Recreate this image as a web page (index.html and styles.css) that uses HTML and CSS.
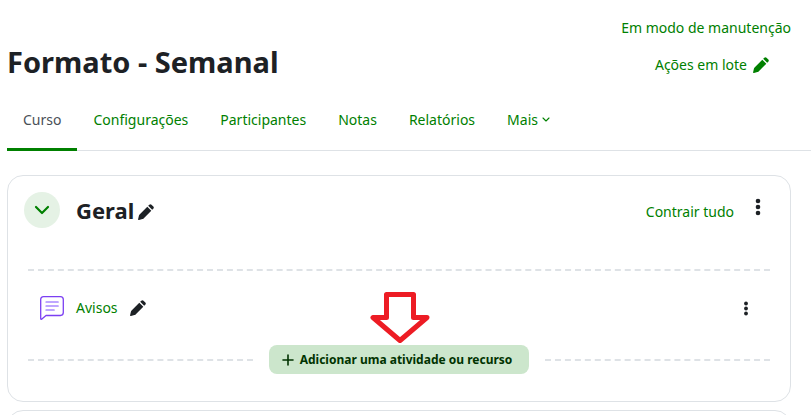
FILE: index.html
```html
<!DOCTYPE html>
<html lang="pt-BR">
<head>
    <meta charset="UTF-8">
    <meta name="viewport" content="width=device-width, initial-scale=1.0">
    <title>Formato - Semanal</title>
    <link rel="stylesheet" href="styles.css">
</head>
<body>
    <svg class="sprite" aria-hidden="true">
        <symbol id="pencil" viewBox="0 0 16 16">
            <path d="M9.3 2.7 13.3 6.7 5.6 14.4Q5.1 14.9 4.4 15.1L1 16Q0 16.2 0.1 15.2L0.9 11.7Q1.1 11 1.6 10.5Z"/>
            <path d="M10.2 1.8 11.3 0.7Q12.4 -0.3 13.5 0.7L15.3 2.5Q16.3 3.6 15.3 4.7L14.2 5.8Z"/>
        </symbol>
        <symbol id="dots" viewBox="0 0 6 18">
            <circle cx="3" cy="3" r="2.3"/>
            <circle cx="3" cy="9" r="2.3"/>
            <circle cx="3" cy="15" r="2.3"/>
        </symbol>
        <symbol id="chevron" viewBox="0 0 16 10">
            <path d="M2 2 8 8 14 2" fill="none" stroke="currentColor" stroke-width="2.2" stroke-linecap="round" stroke-linejoin="round"/>
        </symbol>
    </svg>

    <header class="page-header">
        <h1>Formato - Semanal</h1>
        <div class="header-actions">
            <a href="#">Em modo de manutenção</a>
            <button type="button" class="bulk">Ações em lote <svg class="icon"><use href="#pencil"/></svg></button>
        </div>
    </header>

    <nav class="tabs">
        <a href="#" class="tab active">Curso</a>
        <a href="#" class="tab">Configurações</a>
        <a href="#" class="tab">Participantes</a>
        <a href="#" class="tab">Notas</a>
        <a href="#" class="tab">Relatórios</a>
        <a href="#" class="tab">Mais <svg class="caret"><use href="#chevron"/></svg></a>
    </nav>

    <main>
        <section class="card">
            <div class="section-header">
                <button type="button" class="toggle" aria-label="Contrair"><svg><use href="#chevron"/></svg></button>
                <h2>Geral</h2>
                <button type="button" class="edit" aria-label="Editar nome da seção"><svg class="icon"><use href="#pencil"/></svg></button>
                <a href="#" class="collapse-all">Contrair tudo</a>
                <button type="button" class="menu" aria-label="Editar seção"><svg class="dots"><use href="#dots"/></svg></button>
            </div>
            <div class="section-body">
                <hr class="divider">
                <div class="activity">
                    <svg class="forum" viewBox="0 0 24 24">
                        <path d="M3.6 0.7H20.4Q23.3 0.7 23.3 3.6V16.6Q23.3 19.5 20.4 19.5H6L1.6 23.2Q0.7 23.6 0.7 22.6V3.6Q0.7 0.7 3.6 0.7Z" stroke="#7b3ff2" stroke-width="1.3"/>
                        <path d="M6.2 6H18M6.2 10H18M6.2 14H14" stroke="#a98bff" stroke-width="1.7"/>
                    </svg>
                    <a href="#" class="activity-name">Avisos</a>
                    <button type="button" class="edit" aria-label="Editar título"><svg class="icon"><use href="#pencil"/></svg></button>
                    <button type="button" class="menu" aria-label="Editar atividade"><svg class="dots small"><use href="#dots"/></svg></button>
                </div>
                <div class="add-row">
                    <hr class="divider">
                    <div class="add-wrap">
                        <button type="button" class="add">
                            <svg class="plus" viewBox="0 0 12 12"><path d="M6 1V11M1 6H11" stroke="currentColor" stroke-width="1.6" stroke-linecap="round"/></svg>
                            Adicionar uma atividade ou recurso
                        </button>
                        <svg class="arrow" viewBox="0 0 60 52"><path d="M16.5 2.5H43.5V25.5H57L30 48.5 3 25.5H16.5Z" fill="#fff" stroke="#ed1c24" stroke-width="5" stroke-linejoin="round"/></svg>
                    </div>
                    <hr class="divider">
                </div>
            </div>
        </section>
        <section class="card next"></section>
    </main>
</body>
</html>
```
FILE: styles.css
```css
* {
    box-sizing: border-box;
}
html {
    overflow: hidden;
}
body {
    margin: 0;
    padding-left: 7px;
    font-family: "Noto Sans", "Open Sans", sans-serif;
    font-size: 14px;
    line-height: 20px;
    color: #1d2125;
    background-color: #fff;
}
h1, h2 {
    margin: 0;
    font-weight: bold;
}
a {
    color: #008000;
    text-decoration: none;
}
button {
    padding: 0;
    border: none;
    background: none;
    font: inherit;
    color: inherit;
    cursor: pointer;
}
svg {
    display: block;
    fill: currentColor;
}
.sprite {
    position: absolute;
    width: 0;
    height: 0;
}
.icon {
    width: 16px;
    height: 16px;
}
.page-header {
    display: flex;
    justify-content: space-between;
    align-items: flex-end;
    padding: 18px 20px 0 0;
}
h1 {
    font-size: 29px;
    line-height: 32px;
    padding-bottom: 5px;
}
.header-actions {
    display: flex;
    flex-direction: column;
    align-items: flex-end;
    gap: 17px;
    padding-bottom: 8px;
}
.bulk {
    display: flex;
    align-items: center;
    gap: 6px;
    margin-right: 22px;
    color: #008000;
}
.tabs {
    display: flex;
    margin-top: 6px;
    border-bottom: 1px solid #dee2e6;
}
.tab {
    display: flex;
    align-items: center;
    gap: 4px;
    height: 62px;
    margin-bottom: -1px;
    padding: 2px 16px 0;
    border-bottom: 3px solid transparent;
}
.tab.active {
    color: #495057;
    border-color: #008000;
}
.caret {
    width: 8px;
    height: 5px;
}
main {
    padding: 24px 20px 0 0;
}
.card {
    padding: 16px 20px 27px;
    border: 1px solid #dee2e6;
    border-radius: 16px;
}
.card.next {
    margin-top: 8px;
    min-height: 60px;
}
.section-header {
    display: flex;
    align-items: center;
    margin-left: -4px;
}
.toggle {
    display: flex;
    align-items: center;
    justify-content: center;
    width: 36px;
    height: 36px;
    margin-right: 16px;
    border-radius: 50%;
    background-color: #e5f2e5;
    color: #008000;
}
.toggle svg {
    width: 16px;
    height: 10px;
}
h2 {
    margin-right: 4px;
    font-size: 22px;
    line-height: 36px;
}
.section-header .edit {
    padding-top: 4px;
}
.collapse-all {
    margin-left: auto;
    padding-top: 4px;
}
.menu {
    padding: 0 9px;
}
.section-header .menu {
    margin-left: 12px;
    padding-bottom: 6px;
}
.dots {
    width: 6px;
    height: 18px;
}
.dots.small {
    height: 15px;
}
.divider {
    flex: 1;
    margin: 0;
    border: none;
    border-top: 2px dashed #dee2e6;
}
.section-body {
    padding-top: 41px;
}
.activity {
    display: flex;
    align-items: center;
    height: 74px;
    padding: 0 12px;
}
.forum {
    width: 24px;
    height: 24px;
    margin-right: 12px;
    fill: none;
    stroke-linecap: round;
    stroke-linejoin: round;
}
.activity-name {
    margin-right: 12px;
}
.activity .menu {
    margin-left: auto;
}
.add-row {
    display: flex;
    align-items: center;
    gap: 16px;
}
.add-wrap {
    position: relative;
}
.add {
    display: flex;
    align-items: center;
    gap: 6px;
    height: 29px;
    padding: 0 17px 0 13px;
    border-radius: 8px;
    background-color: #cce6cc;
    color: #003300;
    font-size: 12px;
    font-weight: bold;
}
.plus {
    width: 12px;
    height: 12px;
}
/* callout arrow pointing at the add button */
.arrow {
    position: absolute;
    left: 50%;
    bottom: 100%;
    width: 60px;
    height: 52px;
    margin: 0 0 1px -29px;
}
```
